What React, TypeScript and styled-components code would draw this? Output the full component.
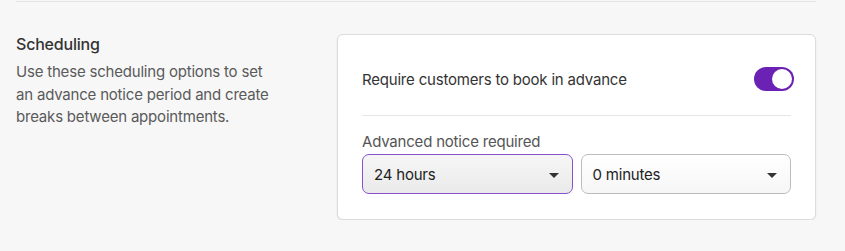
import React from "react";
import styled, { createGlobalStyle } from "styled-components";

const Global = createGlobalStyle`
  html, body { margin: 0; padding: 0; background: #f7f7f7; }
  body { font-family: Inter, "Noto Sans", sans-serif; color: #333; letter-spacing: -0.2px; }
  * { box-sizing: border-box; }
`;

const Page = styled.div`
  padding: 0 29px 0 16px;
`;

const TopRule = styled.div`
  margin-top: 1px;
  height: 1px;
  background: #e4e4e4;
`;

const Section = styled.section`
  display: flex;
  align-items: flex-start;
  padding-top: 32px;
`;

const Intro = styled.div`
  width: 321px;
  flex: none;
`;

const Title = styled.h2`
  margin: 0;
  font-size: 16px;
  line-height: 20px;
  font-weight: 500;
  color: #333;
`;

const Desc = styled.p`
  margin: 7px 0 0;
  font-size: 15px;
  line-height: 22.5px;
  color: #5a5a5a;
  width: 262px;
`;

const Card = styled.div`
  flex: 1;
  background: #fff;
  border: 1px solid #dcdcdc;
  border-radius: 6px;
  box-shadow: 0 1px 2px rgba(0, 0, 0, 0.08);
  padding: 32px 24px 25px;
`;

const Row = styled.div`
  display: flex;
  align-items: center;
  justify-content: space-between;
  height: 24px;
`;

const RowText = styled.span`
  font-size: 15px;
  color: #333;
`;

const Toggle = styled.div<{ $on: boolean }>`
  width: 40px;
  height: 24px;
  margin-right: -3px;
  border-radius: 12px;
  background: ${(p) => (p.$on ? "#6b21b4" : "#ccc")};
  display: flex;
  align-items: center;
  justify-content: ${(p) => (p.$on ? "flex-end" : "flex-start")};
  padding: 2px;
`;

const Knob = styled.span`
  width: 20px;
  height: 20px;
  border-radius: 50%;
  background: #fff;
`;

const Divider = styled.hr`
  margin: 24px 0 0;
  border: none;
  height: 1px;
  background: #e6e6e6;
`;

const Label = styled.div`
  margin-top: 16px;
  font-size: 15px;
  line-height: 20px;
  color: #555;
`;

const Selects = styled.div`
  margin-top: 2px;
  display: grid;
  grid-template-columns: 1fr 1fr;
  gap: 8px;
`;

const Select = styled.div<{ $focused?: boolean }>`
  height: 40px;
  border-radius: 7px;
  border: 1px solid ${(p) => (p.$focused ? "#8850cc" : "#bcbcbc")};
  background: ${(p) =>
    p.$focused
      ? "linear-gradient(#f6f6f6, #eaeaea)"
      : "linear-gradient(#ffffff, #f6f6f6)"};
  display: flex;
  align-items: center;
  justify-content: space-between;
  padding: 0 13px 0 11px;
  font-size: 15px;
  color: #222;
`;

const Caret = styled.span`
  width: 0;
  height: 0;
  border-left: 5px solid transparent;
  border-right: 5px solid transparent;
  border-top: 5px solid #333;
  margin-top: 2px;
`;

export default function App() {
  return (
    <Page>
      <Global />
      <TopRule />
      <Section>
        <Intro>
          <Title>Scheduling</Title>
          <Desc>
            Use these scheduling options to set an advance notice period and
            create breaks between appointments.
          </Desc>
        </Intro>
        <Card>
          <Row>
            <RowText>Require customers to book in advance</RowText>
            <Toggle $on>
              <Knob />
            </Toggle>
          </Row>
          <Divider />
          <Label>Advanced notice required</Label>
          <Selects>
            <Select $focused>
              24 hours
              <Caret />
            </Select>
            <Select>
              0 minutes
              <Caret />
            </Select>
          </Selects>
        </Card>
      </Section>
    </Page>
  );
}
